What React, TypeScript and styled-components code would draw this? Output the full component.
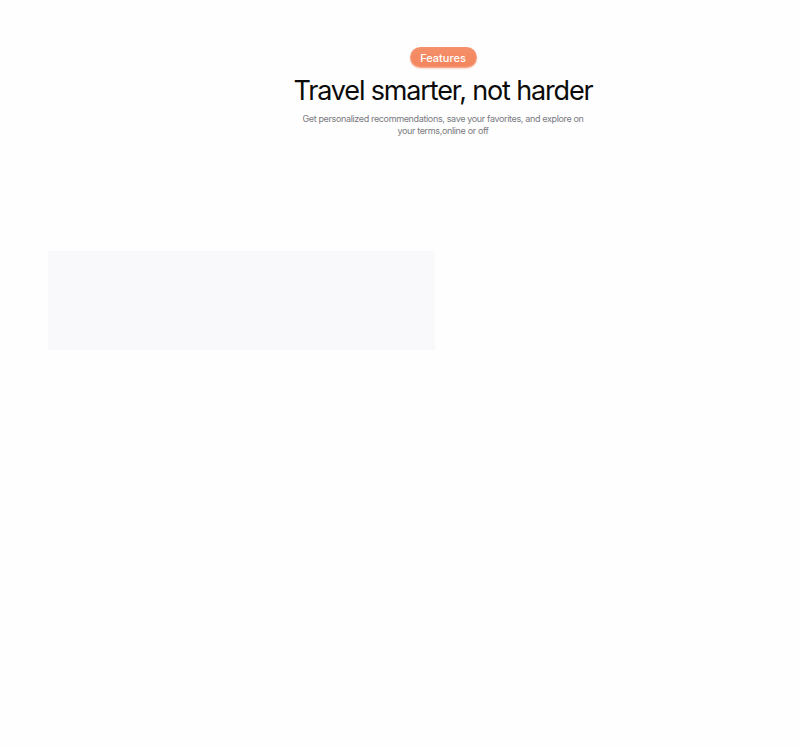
import styled, { createGlobalStyle } from 'styled-components';

const GlobalStyle = createGlobalStyle`
    html, body {
        margin:0;
        padding:0;
        background:#fefefe;
        font-family:Inter, "Noto Sans", sans-serif;
    }
`;

const App = () => {
    return (
        <Page>
            <GlobalStyle />
            <Header>
                <Badge>Features</Badge>
                <Title>Travel smarter, not harder</Title>
                <Subtitle>
                    Get personalized recommendations, save your favorites, and explore on
                    <br />
                    your terms,online or off
                </Subtitle>
            </Header>
            <Cards>
                <GhostCard />
            </Cards>
        </Page>
    );
};

export default App;

const Page = styled.div`
    width:800px;
    height:747px;
    background:#fefefe;
    overflow:hidden;
`;

const Header = styled.header`
    display:flex;
    flex-direction:column;
    align-items:center;
    padding:47px 0 0 86px;
`;

const Badge = styled.span`
    display:flex;
    align-items:center;
    justify-content:center;
    width:67px;
    height:21px;
    border-radius:11px;
    background:linear-gradient(180deg, #f5906a 0%, #f3845c 100%);
    box-shadow:inset 0 -1px 2px rgba(255,255,255,0.35), 0 1px 2px rgba(240,120,80,0.25);
    color:#fff;
    font-size:11px;
    font-weight:500;
`;

const Title = styled.h1`
    margin:6px 0 0;
    font-size:27px;
    font-weight:400;
    letter-spacing:-1.15px;
    line-height:34px;
    color:#0b0b0b;
`;

const Subtitle = styled.p`
    margin:5px 0 0;
    font-size:9px;
    line-height:12px;
    letter-spacing:-0.35px;
    color:#7a7a7f;
    text-align:center;
`;

const Cards = styled.div`
    display:flex;
    padding:114px 0 0 48px;
`;

const GhostCard = styled.div`
    width:387px;
    height:99px;
    background:#f9f8fb;
    filter:blur(0.6px);
`;
